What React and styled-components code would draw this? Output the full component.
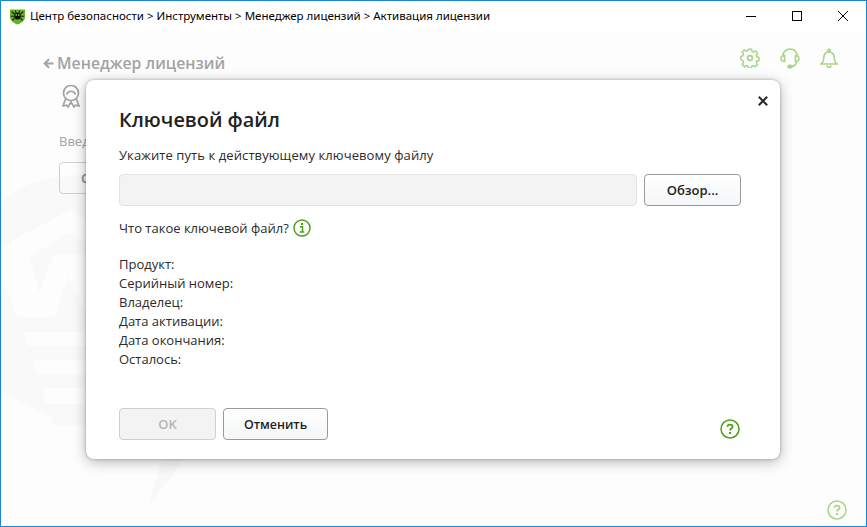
import styled, { createGlobalStyle } from "styled-components";

const GlobalStyle = createGlobalStyle`
  html, body {
    margin: 0;
    padding: 0;
    background: #fff;
  }
  * {
    box-sizing: border-box;
  }
`;

const Window = styled.div`
  position: relative;
  width: 867px;
  height: 527px;
  overflow: hidden;
  display: flex;
  flex-direction: column;
  border: 1px solid #1a85d8;
  border-top-width: 0;
  background: #fdfdfd;
  font-family: "Open Sans", "Noto Sans", sans-serif;
  color: #2b2b2b;
`;

const TitleBar = styled.div`
  height: 31px;
  flex: none;
  display: flex;
  align-items: center;
  background: #fff;
  border-top: 1px solid #1a85d8;
  padding-left: 8px;
`;

const TitleText = styled.span`
  margin-left: 4px;
  font-family: "Noto Sans", sans-serif;
  font-size: 11.5px;
  line-height: 14px;
  color: #000;
  white-space: nowrap;
`;

const WindowControls = styled.div`
  margin-left: auto;
  display: flex;
`;

const ControlButton = styled.div`
  width: 46px;
  height: 30px;
  display: flex;
  align-items: center;
  justify-content: center;
`;

const Content = styled.div`
  position: relative;
  flex: 1;
  padding: 21px 0 0 42px;
`;

const Watermark = styled.svg`
  position: absolute;
  left: -1px;
  top: 140px;
`;

const BackRow = styled.div`
  position: relative;
  display: flex;
  align-items: center;
  gap: 3px;
  height: 22px;
  color: #a3a3a3;
  font-size: 15.8px;
  font-weight: 600;
`;

const ToolIcons = styled.div`
  position: absolute;
  top: 17px;
  left: 739px;
  display: flex;
  gap: 20px;
`;

const CertRow = styled.div`
  position: relative;
  margin: 11px 0 0 19px;
  height: 24px;
`;

const Hint = styled.div`
  position: relative;
  margin: 23px 0 0 16px;
  font-size: 13px;
  line-height: 18px;
  color: #a3a3a3;
`;

const GhostButton = styled.div`
  position: relative;
  margin: 12px 0 0 16px;
  width: 110px;
  height: 32px;
  border: 1px solid #cfcfcf;
  border-radius: 4px;
  padding-left: 21px;
  line-height: 30px;
  font-size: 13px;
  font-weight: 600;
  color: #8a8a8a;
`;

const PageHelp = styled.div`
  position: absolute;
  right: 19px;
  bottom: 6px;
  display: flex;
`;

const Dialog = styled.div`
  position: absolute;
  left: 85px;
  top: 80px;
  width: 694px;
  height: 379px;
  background: #fff;
  border-radius: 8px;
  box-shadow: 0 0 3px rgba(0, 0, 0, 0.3), 0 3px 14px rgba(0, 0, 0, 0.28);
  padding: 26px 39px 0 33px;
  display: flex;
  flex-direction: column;
`;

const CloseButton = styled.svg`
  position: absolute;
  top: 16px;
  right: 12px;
`;

const Heading = styled.h1`
  margin: 0;
  font-size: 19.9px;
  line-height: 28px;
  font-weight: 600;
  color: #222;
`;

const Label = styled.div`
  margin-top: 13px;
  font-size: 13px;
  line-height: 17px;
  letter-spacing: 0.09px;
`;

const PathRow = styled.div`
  margin-top: 10px;
  display: flex;
  gap: 7px;
`;

const PathInput = styled.div`
  width: 518px;
  height: 32px;
  background: #f3f3f3;
  border: 1px solid #e2e2e2;
  border-radius: 4px;
`;

const Button = styled.div`
  height: 32px;
  width: ${(p) => p.$width}px;
  display: flex;
  align-items: center;
  justify-content: center;
  border-radius: 4px;
  border: 1px solid ${(p) => (p.$disabled ? "#cfcfcf" : "#9a9a9a")};
  background: ${(p) => (p.$disabled ? "#f3f3f3" : "linear-gradient(#ffffff, #f4f6f8)")};
  color: ${(p) => (p.$disabled ? "#b5b5b5" : "#1e1e1e")};
  font-size: ${(p) => p.$size || 13}px;
  font-weight: 600;
`;

const WhatIs = styled.div`
  margin-top: 12px;
  display: flex;
  align-items: center;
  gap: 4px;
  height: 20px;
  font-size: 13px;
`;

const InfoList = styled.div`
  margin-top: 17px;
  font-size: 13px;
  line-height: 19px;
`;

const Footer = styled.div`
  margin-top: auto;
  margin-bottom: 19px;
  display: flex;
  align-items: center;
  gap: 7px;
`;

const DialogHelp = styled.div`
  margin: 10px 1px 0 auto;
  display: flex;
`;

const HelpIcon = ({ color }) => (
  <svg width="20" height="20" viewBox="0 0 20 20" fill="none">
    <circle cx="10" cy="10" r="9" stroke={color} strokeWidth="1.5" />
    <path
      d="M7.4 7.8C7.5 6.3 8.6 5.600 10 5.600c1.500 0 2.600.8 2.600 2.100 0 1.900-2.600 1.800-2.600 3.900"
      stroke={color}
      strokeWidth="1.7"
    />
    <rect x="9" y="13" width="2" height="2" fill={color} />
  </svg>
);

const LogoIcon = () => (
  <svg width="17" height="17" viewBox="0 0 17 17">
    <path d="M1 1.500h15v7.500c0 3.600-3.600 6.200-7.500 7.500C4.600 15.200 1 12.600 1 9z" fill="#5fb41f" />
    <ellipse cx="8.500" cy="8" rx="3.400" ry="3.600" fill="#111" />
    <g stroke="#111" strokeWidth="1.100" fill="none">
      <path d="M5.400 6 2.800 3.600M11.600 6l2.600-2.400M4.800 8.200H2.200M12.200 8.200h2.600M5.400 10.400 3.400 12.400M11.600 10.400l2 2M7 4.600 6.200 2.600M10 4.600l.8-2" />
    </g>
    <circle cx="7.200" cy="7" r=".8" fill="#d8f0b0" />
    <circle cx="9.800" cy="7" r=".8" fill="#d8f0b0" />
  </svg>
);

const GearIcon = () => (
  <svg width="20" height="20" viewBox="0 0 20 20" fill="none" stroke="#a9d488" strokeWidth="1.600">
    <path d="M8.300 1h3.400l.5 2.500 1.500.7 2.200-1.300 2.200 2.500-1.400 2 .5 1.600 2.300.9v3.200l-2.300.7-.5 1.600 1.200 2.100-2.300 2.300-2.100-1.300-1.500.6-.5 1.900H8.300l-.5-2-1.500-.6-2.100 1.300-2.300-2.300 1.200-2.100-.5-1.600L.3 12V8.900l2.300-.9.5-1.600-1.400-2 2.200-2.500 2.200 1.300 1.500-.7z" transform="translate(.6 .2) scale(.94)" />
    <circle cx="10" cy="10" r="2.400" />
  </svg>
);

const HeadsetIcon = () => (
  <svg width="20" height="21" viewBox="0 0 20 21" fill="none" stroke="#a9d488" strokeWidth="1.600">
    <path d="M3 9V7.600C3 3.800 6 1 10 1s7 2.800 7 6.600V9" />
    <path d="M4.600 7.500C2.400 7.500 1 8.800 1 10.500s1.400 3 3.600 3zM15.400 7.500c2.200 0 3.600 1.300 3.600 3s-1.400 3-3.600 3z" />
    <path d="M16.500 13.500c0 3-1.800 4.700-5 5" />
    <ellipse cx="10" cy="18.500" rx="2" ry="1.300" fill="#a9d488" />
  </svg>
);

const BellIcon = () => (
  <svg width="18" height="20" viewBox="0 0 18 20" fill="none" stroke="#a9d488" strokeWidth="1.600">
    <path d="M1 16c2.200-1.400 2.600-3.500 2.800-6.500C4 6 6 4 9 4s5 2 5.200 5.500c.2 3 .6 5.100 2.800 6.500z" />
    <circle cx="9" cy="2.400" r="1.200" />
    <path d="M7 17.500a2 2 0 0 0 4 0" />
  </svg>
);

const CertIcon = () => (
  <svg width="18" height="23" viewBox="0 0 18 23" fill="none" stroke="#a3a3a3" strokeWidth="1.700">
    <circle cx="9" cy="8" r="7.500" />
    <path d="M4.600 9.500a4.600 4.600 0 0 1 8.800 0" />
    <path d="M3.500 14 1 21l3.500-.8L6 22l3-5 3 5 1.500-1.800 3.500.8-2.500-7" />
  </svg>
);

const InfoIcon = () => (
  <svg width="18" height="18" viewBox="0 0 18 18" fill="none">
    <circle cx="9" cy="9" r="8" stroke="#4f9d17" strokeWidth="1.500" />
    <rect x="8" y="4" width="2" height="2" fill="#4f9d17" />
    <path d="M7 7.700h2.500v5M6.800 13h4.400" stroke="#4f9d17" strokeWidth="1.500" />
  </svg>
);

const BackArrow = () => (
  <svg width="11" height="11" viewBox="0 0 11 11" fill="none" stroke="#a3a3a3" strokeWidth="2">
    <path d="M10.500 5.500H2M6 1.200 1.700 5.500 6 9.800" />
  </svg>
);

const infoRows = ["Продукт:", "Серийный номер:", "Владелец:", "Дата активации:", "Дата окончания:", "Осталось:"];

export default function App() {
  return (
    <>
      <GlobalStyle />
      <Window>
        <TitleBar>
          <LogoIcon />
          <TitleText>Центр безопасности &gt; Инструменты &gt; Менеджер лицензий &gt; Активация лицензии</TitleText>
          <WindowControls>
            <ControlButton>
              <svg width="10" height="10" viewBox="0 0 10 10"><path d="M0 5.500h10" stroke="#000" /></svg>
            </ControlButton>
            <ControlButton>
              <svg width="10" height="10" viewBox="0 0 10 10"><rect x=".5" y=".5" width="9" height="9" fill="none" stroke="#000" /></svg>
            </ControlButton>
            <ControlButton>
              <svg width="10" height="10" viewBox="0 0 10 10"><path d="M0 0l10 10M10 0 0 10" stroke="#000" /></svg>
            </ControlButton>
          </WindowControls>
        </TitleBar>
        <Content>
          <Watermark width="200" height="340" viewBox="0 0 200 340">
            <path d="M0 32C15 18 35 8 60 6L110 0V254H52V246C30 235 10 225 0 222z" fill="#f9f9f9" />
            <path d="M162 288 149 333 185 288z" fill="#f8f8f8" />
            <path d="M0 76 70 39 110 62V189L68 105 55 146H17L0 102z" fill="#fdfdfd" />
            <path d="M30 86 68 62 110 84H53L39 122z" fill="#f9f9f9" />
            <path d="M23 161H110V175H27zM32 189H110V204H37zM42 217H110V233H46z" fill="#fdfdfd" />
          </Watermark>
          <BackRow>
            <BackArrow />
            <span>Менеджер лицензий</span>
          </BackRow>
          <CertRow>
            <CertIcon />
          </CertRow>
          <Hint>Введите</Hint>
          <GhostButton>С</GhostButton>
          <ToolIcons>
            <GearIcon />
            <HeadsetIcon />
            <BellIcon />
          </ToolIcons>
          <PageHelp>
            <HelpIcon color="#a9d488" />
          </PageHelp>
        </Content>
        <Dialog>
          <CloseButton width="10" height="10" viewBox="0 0 10 10">
            <path d="M.8.8l8.400 8.400M9.200.8.800 9.200" stroke="#2b2b2b" strokeWidth="2" />
          </CloseButton>
          <Heading>Ключевой файл</Heading>
          <Label>Укажите путь к действующему ключевому файлу</Label>
          <PathRow>
            <PathInput />
            <Button $width={97}>Обзор...</Button>
          </PathRow>
          <WhatIs>
            <span>Что такое ключевой файл?</span>
            <InfoIcon />
          </WhatIs>
          <InfoList>
            {infoRows.map((row) => (
              <div key={row}>{row}</div>
            ))}
          </InfoList>
          <Footer>
            <Button $width={97} $disabled>OK</Button>
            <Button $width={105} $size={12.4}>Отменить</Button>
            <DialogHelp>
              <HelpIcon color="#4f9d17" />
            </DialogHelp>
          </Footer>
        </Dialog>
      </Window>
    </>
  );
}
